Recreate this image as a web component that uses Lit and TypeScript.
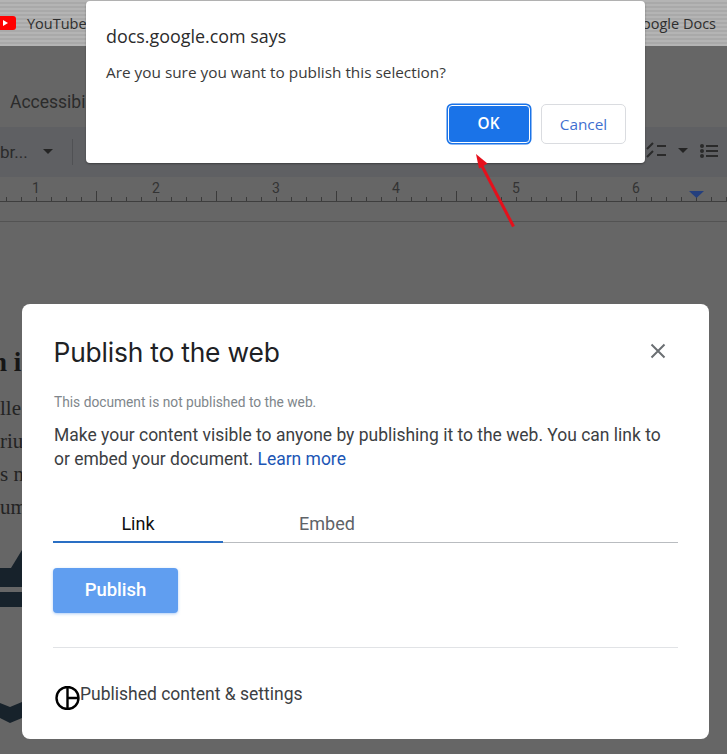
import { LitElement, html, css, svg } from "lit";
import { customElement } from "lit/decorators.js";

const TICKS = Array.from({ length: 49 }, (_, i) => 6 + i * 15);
const NUMS = [1, 2, 3, 4, 5, 6];

@customElement("app-root")
export class AppRoot extends LitElement {
  static styles = css`
    :host { display: block; width: 727px; height: 754px; position: relative; overflow: hidden; background: #666; font-family: "Open Sans", sans-serif; }
    .bar { height: 46px; display: flex; justify-content: space-between; align-items: center; padding: 0 11px 0 0; box-sizing: border-box;
      background: repeating-linear-gradient(180deg, #b4b4b4 0, #b4b4b4 2px, #a9a9a9 2px, #a9a9a9 4px); color: #2e2e2e; font-size: 14.5px; }
    .bar .l { display: flex; align-items: center; gap: 10px; }
    .yt { display: block; width: 17px; height: 14px; }
    .menu { height: 81px; background: #666; box-sizing: border-box; padding: 45px 0 0 10px; font-size: 17.5px; color: #2b2b2b; line-height: 22px; font-family: "Roboto", sans-serif; }
    .toolbar { height: 50px; background: #5f6063; display: flex; align-items: center; justify-content: space-between; font-family: "Roboto", sans-serif; font-size: 17px; color: #2a2a2a; box-sizing: border-box; padding: 0 8px 1px 0; }
    .tb-l, .tb-r { display: flex; align-items: center; }
    .tb-l svg, .tb-r svg { display: block; }
    .caret { width: 0; height: 0; border-left: 5px solid transparent; border-right: 5px solid transparent; border-top: 5px solid #242424; }
    .tb-l .caret { margin-left: 15px; }
    .tb-r { margin-top: -2px; }
    .sep { width: 1px; height: 26px; background: #505154; margin-left: 19px; }
    .ruler { display: block; width: 727px; height: 50px; background: #666; }
    .doc { position: absolute; left: 0; top: 340px; width: 22px; font-family: "Liberation Serif", serif; color: #232323; font-size: 21px; display: flex; flex-direction: column; white-space: nowrap; overflow: hidden; }
    .doc .h { font-weight: 700; font-size: 27px; line-height: 44px; margin: 0 0 8px -8px; color: #161616; }
    .doc .t { line-height: 33px; }
    .shapes { position: absolute; left: 0; top: 540px; display: block; }

    .alert { position: absolute; left: 86px; top: 1px; width: 559px; height: 162px; background: #fff; border-radius: 4px; box-sizing: border-box; padding: 21px 19px 19px 20px; display: flex; flex-direction: column; box-shadow: 0 1px 2px rgba(0,0,0,.35); }
    .alert h2 { margin: 0; font-weight: 400; font-size: 17.9px; line-height: 28px; color: #2b2b2b; }
    .alert p { margin: 12px 0 0; font-size: 15.35px; line-height: 20px; color: #3a3a3a; }
    .actions { margin-top: auto; display: flex; justify-content: flex-end; gap: 10px; align-items: center; }
    .btn { box-sizing: border-box; display: flex; align-items: center; justify-content: center; font-size: 15.35px; padding-bottom: 1px; }
    .ok { width: 80px; height: 36px; background: #1a73e8; color: #fff; font-weight: 600; border-radius: 3px; outline: 1px solid #fff; outline-offset: 0; box-shadow: 0 0 0 2.5px #1a73e8; margin: -1px 2.5px 0; }
    .cancel { width: 85px; height: 40px; border-radius: 5px; border: 1px solid #dadce0; color: #3f6fd0; background: #fff; }

    .arrow { position: absolute; left: 470px; top: 150px; display: block; pointer-events: none; }

    .modal { position: absolute; left: 22px; top: 304px; width: 687px; height: 435px; background: #fff; border-radius: 8px; box-sizing: border-box; padding: 29px 31px 0; display: flex; flex-direction: column; font-family: "Roboto", sans-serif; }
    .head { display: flex; justify-content: space-between; align-items: center; height: 38px; }
    .head h1 { margin: 0 0 0 0.5px; font-weight: 400; color: #202124; font-family: "Inter", sans-serif; letter-spacing: -0.2px; font-size: 26.4px; }
    .close { display: block; margin-right: 12px; margin-top: -3px; }
    .status { margin: 22px 0 0 1px; font-size: 13.75px; line-height: 18px; color: #80868b; }
    .desc { margin: 12px 0 0 1px; font-size: 17.48px; line-height: 24px; color: #3c4043; width: 620px; }
    .desc a { color: #1c56b5; text-decoration: none; }
    .tabs { display: flex; gap: 19px; margin-top: 35px; border-bottom: 1px solid #b9bcc0; height: 37px; box-sizing: border-box; }
    .tab { width: 170px; text-align: center; font-size: 18px; line-height: 36px; color: #5f6368; box-sizing: border-box; }
    .tab.on { color: #111; border-bottom: 2px solid #2a6fc4; height: 37px; }
    .publish { margin-top: 25px; width: 125px; height: 45px; box-sizing: border-box; padding-bottom: 2px; background: #609ef0; color: #fff; border-radius: 4px; display: flex; align-items: center; justify-content: center; font-size: 18.5px; font-weight: 500; box-shadow: 0 1px 3px rgba(96,158,240,.5); }
    .rule { margin-top: 34px; height: 1px; background: #e1e3e6; }
    .pub { margin-top: 31px; display: flex; align-items: flex-start; margin-left: 2px; font-size: 17.5px; line-height: 30px; color: #3c4043; }
    .pub svg { display: block; margin-top: 7px; }
  `;

  render() {
    return html`
      <div class="bar">
        <div class="l">
          <svg class="yt" viewBox="0 0 17 14"><rect x="-5" y="0" width="21" height="14" rx="3" fill="#f00"/><path d="M3 4l5 3-5 3z" fill="#fff"/></svg>
          <span>YouTube</span>
        </div>
        <span>Google Docs</span>
      </div>
      <div class="menu">Accessibility</div>
      <div class="toolbar">
        <div class="tb-l"><span>br...</span><i class="caret"></i><i class="sep"></i></div>
        <div class="tb-r">
          <svg width="24" height="18" viewBox="0 0 24 18" fill="none" stroke="#2a2a2a" stroke-width="2"><path d="M1 7l6-6M1 15l6-6M11 4h9M11 13h9"/></svg>
          <i class="caret" style="margin:0 11px 0 8px"></i>
          <svg width="20" height="16" viewBox="0 0 20 16" fill="#2a2a2a"><circle cx="3" cy="3" r="2"/><circle cx="3" cy="8" r="2"/><circle cx="3" cy="13" r="2"/><rect x="7" y="2" width="12" height="2"/><rect x="7" y="7" width="12" height="2"/><rect x="7" y="12" width="12" height="2"/></svg>
        </div>
      </div>
      <svg class="ruler" viewBox="0 177 727 50">
        ${TICKS.map((x, i) => {
          const tall = (i + 2) % 8 === 0 && i > 0;
          return svg`<rect x=${x} y=${tall ? 191 : 197} width="1" height=${tall ? 10 : 4} fill="#3a3a3a"></rect>`;
        })}
        <rect x="0" y="201" width="727" height="1" fill="#3e3e3e"></rect>
        <rect x="0" y="221" width="727" height="1" fill="#535353"></rect>
        ${NUMS.map((n) => svg`<text x=${36 + (n - 1) * 120} y="193" text-anchor="middle" font-size="14" font-family="Roboto, sans-serif" fill="#333">${n}</text>`)}
        <path d="M689 191h15l-7.500 7z" fill="#243f7e"></path>
      </svg>
      <div class="doc">
        <div class="h">n i</div>
        <div class="t">lle</div>
        <div class="t">riu</div>
        <div class="t">s n</div>
        <div class="t">um</div>
      </div>
      <svg class="shapes" width="22" height="190" viewBox="0 0 22 190" fill="#17222b">
        <path d="M0 28H11L22 10V47H0z"></path>
        <rect x="0" y="52" width="22" height="15"></rect>
        <path d="M0 163L10 167L22 162V178L10 183L0 178z"></path>
      </svg>

      <div class="alert">
        <h2>docs.google.com says</h2>
        <p>Are you sure you want to publish this selection?</p>
        <div class="actions">
          <div class="btn ok">OK</div>
          <div class="btn cancel">Cancel</div>
        </div>
      </div>

      <svg class="arrow" width="50" height="80" viewBox="470 150 50 80">
        <path d="M513.500 226.500L482 166" stroke="#e5101c" stroke-width="3" fill="none"></path>
        <path d="M476 154l11.500 9.500-8.500 5z" fill="#e5101c"></path>
      </svg>

      <div class="modal">
        <div class="head">
          <h1>Publish to the web</h1>
          <svg class="close" width="16" height="16" viewBox="0 0 16 16" stroke="#6b6f73" stroke-width="2" fill="none"><path d="M1.500 1.500l13 13M14.500 1.500l-13 13"/></svg>
        </div>
        <div class="status">This document is not published to the web.</div>
        <div class="desc">Make your content visible to anyone by publishing it to the web. You can link to or embed your document. <a>Learn more</a></div>
        <div class="tabs"><div class="tab on">Link</div><div class="tab">Embed</div></div>
        <div class="publish">Publish</div>
        <div class="rule"></div>
        <div class="pub">
          <svg width="25" height="24" viewBox="0 0 25 24" fill="none" stroke="#000" stroke-width="2.400"><circle cx="12.500" cy="12" r="11"/><path d="M12.500 1v22M12.500 12h11"/></svg>
          <span>Published content &amp; settings</span>
        </div>
      </div>
    `;
  }
}
